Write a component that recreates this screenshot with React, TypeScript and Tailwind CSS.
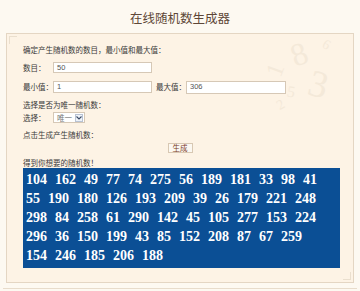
import React from "react"

const rows = [
  "104 162 49 77 74 275 56 189 181 33 98 41",
  "55 190 180 126 193 209 39 26 179 221 248",
  "298 84 258 61 290 142 45 105 277 153 224",
  "296 36 150 199 43 85 152 208 87 67 259",
  "154 246 185 206 188",
]

const cjk = { fontFamily: '"Noto Sans CJK SC", "Noto Sans", sans-serif' }

function Label({ children }: { children: React.ReactNode }) {
  return <span className="w-[30px] shrink-0 leading-[10px]">{children}</span>
}

export default function App() {
  return (
    <div
      className="w-[360px] h-[291px] bg-[#fdf9f1] relative overflow-hidden text-[7.5px] text-[#3a3a3a]"
      style={cjk}
    >
      {/* title */}
      <div className="h-[33px] flex items-center justify-center pt-[4px] text-[12.5px] text-[#5e4737]">
        在线随机数生成器
      </div>

      {/* panel */}
      <div className="mx-[6px] h-[250px] border border-[#e4d6c3] bg-[#fdf3e5] relative pl-[16px] flex flex-col">
        {/* faint number watermark */}
        <div className="absolute right-[6px] top-[2px] w-[90px] h-[90px] text-[#f4e9d9] pointer-events-none select-none" style={{ fontFamily: '"Liberation Serif", serif' }}>
          <span className="absolute left-[34px] top-[-6px] text-[32px] rotate-[-20deg]">8</span>
          <span className="absolute left-[52px] top-[20px] text-[38px] rotate-[15deg]">3</span>
          <span className="absolute left-[12px] top-[16px] text-[24px] rotate-[-70deg]">1</span>
          <span className="absolute left-[30px] top-[44px] text-[16px] rotate-[10deg]">5</span>
          <span className="absolute left-[20px] top-[58px] text-[14px] rotate-[-30deg]">2</span>
          <span className="absolute left-[66px] top-[-2px] text-[14px] rotate-[30deg]">6</span>
        </div>
        {/* corner marks */}
        <div className="absolute left-[2px] top-[2px] w-[8px] h-[8px] border-l border-t border-[#eadfce]" />
        <div className="absolute right-[2px] bottom-[2px] w-[8px] h-[8px] border-r border-b border-[#eadfce]" />

        <div className="relative mt-[11px] h-[10px] leading-[10px]">确定产生随机数的数目，最小值和最大值：</div>

        <div className="relative mt-[7px] h-[11px] flex items-center">
          <Label>数目：</Label>
          <div className="w-[99px] h-[11px] border border-[#d6c8b6] bg-white pl-[3px] flex items-center text-[7.5px] text-[#555]" style={{ fontFamily: '"Liberation Sans", sans-serif' }}>
            50
          </div>
        </div>

        <div className="relative mt-[8px] h-[12px] flex items-center">
          <Label>最小值：</Label>
          <div className="w-[99px] h-[12px] border border-[#d6c8b6] bg-white pl-[3px] flex items-center text-[7.5px] text-[#555]" style={{ fontFamily: '"Liberation Sans", sans-serif' }}>
            1
          </div>
          <span className="ml-[4px] w-[30px] leading-[10px]">最大值：</span>
          <div className="w-[100px] h-[13px] border border-[#d6c8b6] bg-white pl-[3px] flex items-center text-[7.5px] text-[#555]" style={{ fontFamily: '"Liberation Sans", sans-serif' }}>
            306
          </div>
        </div>

        <div className="relative mt-[7px] h-[10px] leading-[10px]">选择是否为唯一随机数：</div>

        <div className="relative mt-[2px] h-[11px] flex items-center">
          <Label>选择：</Label>
          <div className="w-[32px] h-[11px] border border-[#d6c8b6] bg-white flex items-center justify-between pl-[3px] pr-[1px] text-[#777]">
            <span className="leading-[9px]">唯一</span>
            <span className="w-[8px] h-[8px] border border-[#b9c3d4] bg-[#eef2f8] flex items-center justify-center">
              <svg width="6" height="4" viewBox="0 0 6 4">
                <path d="M0.5 0.5 L3 3 L5.5 0.5" fill="none" stroke="#3b4a66" strokeWidth="1.1" />
              </svg>
            </span>
          </div>
        </div>

        <div className="relative mt-[7px] h-[10px] leading-[10px]">点击生成产生随机数：</div>

        <div className="relative mt-[3px] h-[10px] flex justify-center pr-[16px]">
          <div className="w-[25px] h-[10px] border border-[#d8c8b3] bg-[#fcf8f1] flex items-center justify-center text-[7.5px] leading-[8px] text-[#7b3a26]">
            生成
          </div>
        </div>

        <div className="relative mt-[5px] h-[10px] leading-[10px]">得到你想要的随机数！</div>

        <div
          className="relative w-[317px] h-[100px] bg-[#0b4f95] text-white text-[14px] leading-[19px] font-bold px-[3px] pt-[2px] whitespace-nowrap [word-spacing:4.5px]"
          style={{ fontFamily: '"Liberation Serif", serif' }}
        >
          {rows.map((r) => (
            <div key={r}>{r}</div>
          ))}
        </div>
      </div>

      {/* bottom frame line */}
      <div className="mx-[3px] mt-[5px] h-px bg-[#e8dccb]" />
    </div>
  )
}
